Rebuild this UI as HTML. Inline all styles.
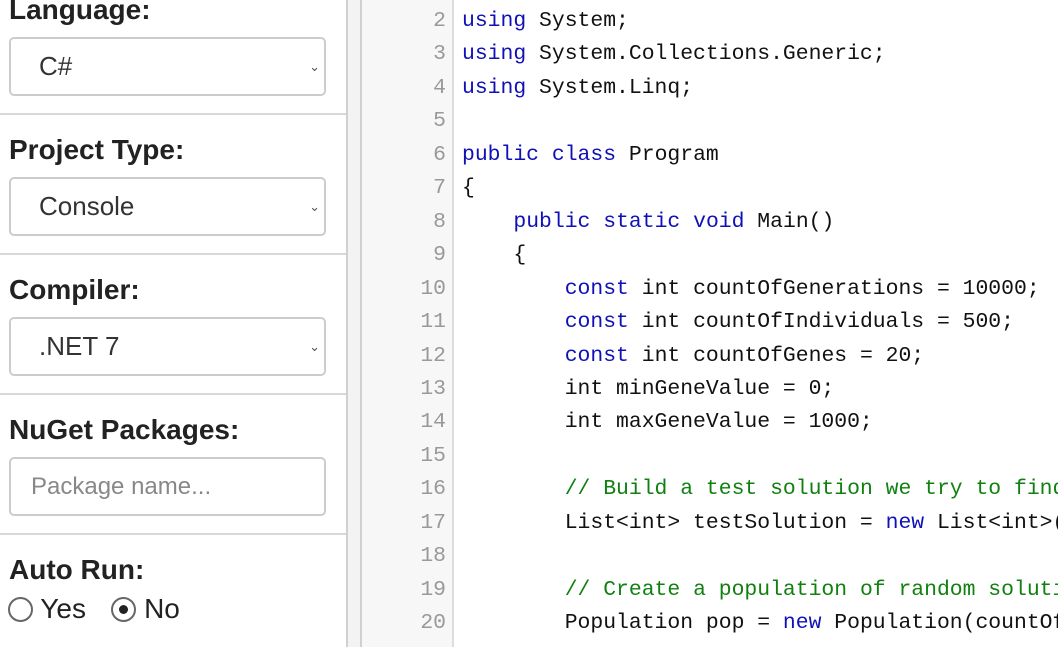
<!DOCTYPE html>
<html><head><style>
body{margin:0;width:1058px;height:647px;overflow:hidden;background:#fff;font-family:"Liberation Sans",sans-serif;position:relative}
.side{position:absolute;left:0;top:0;width:346px;height:647px;border-right:2px solid #d0d0d0;background:#fff}
.lab{position:absolute;left:9px;font-weight:bold;font-size:28px;color:#222}
.sel{position:absolute;left:9px;width:313px;height:55px;border:2px solid #ccc;border-radius:5px;font-size:26px;color:#333;line-height:55px;box-sizing:content-box}
.sel span{position:absolute;left:28px}
.sel i{position:absolute;right:4px;top:0;font-style:normal;font-size:13px;color:#555}
.hr{position:absolute;left:0;width:346px;height:2px;background:#d8d8d8}
.gap{position:absolute;left:348px;top:0;width:12px;height:647px;background:#f3f3f3;border-right:2px solid #d0d0d0}
.gut{position:absolute;left:362px;top:0;width:90px;height:647px;background:#f7f7f7;border-right:2px solid #ddd}
.ln{position:absolute;width:446px;left:0;text-align:right;font-family:"Liberation Mono",monospace;font-size:21.4px;color:#999}
.cd{position:absolute;left:462px;font-family:"Liberation Mono",monospace;font-size:21.4px;color:#111;white-space:pre}
.k{color:#1010b8}.c{color:#118011}
.r{display:inline-block;width:25px;height:25px;border:2px solid #666;border-radius:50%;box-sizing:border-box;vertical-align:-4px;position:relative}
</style></head><body>
<div class="side">
<div class="lab" style="top:-6px">Language:</div>
<div class="sel" style="top:37px"><span>C#</span><i>⌄</i></div>
<div class="hr" style="top:113px"></div>
<div class="lab" style="top:134px">Project Type:</div>
<div class="sel" style="top:177px"><span>Console</span><i>⌄</i></div>
<div class="hr" style="top:253px"></div>
<div class="lab" style="top:274px">Compiler:</div>
<div class="sel" style="top:317px"><span>.NET 7</span><i>⌄</i></div>
<div class="hr" style="top:393px"></div>
<div class="lab" style="top:414px">NuGet Packages:</div>
<div class="sel" style="top:457px;color:#888;font-size:24px"><span style="left:20px">Package name...</span></div>
<div class="hr" style="top:533px"></div>
<div class="lab" style="top:554px">Auto Run:</div>
<div style="position:absolute;left:8px;top:593px;font-size:28px;color:#222"><span class="r"></span> Yes &nbsp;&nbsp;<span class="r" style="margin-left:2px"><span style="position:absolute;left:6px;top:6px;width:9px;height:9px;border-radius:50%;background:#222"></span></span> No</div>
</div>
<div class="gap"></div>
<div class="gut"></div>
<div id="code"></div>
<script>
var L=[
'<span class="k">using</span> System;',
'<span class="k">using</span> System.Collections.Generic;',
'<span class="k">using</span> System.Linq;',
'',
'<span class="k">public</span> <span class="k">class</span> Program',
'{',
'    <span class="k">public</span> <span class="k">static</span> <span class="k">void</span> Main()',
'    {',
'        <span class="k">const</span> int countOfGenerations = 10000;',
'        <span class="k">const</span> int countOfIndividuals = 500;',
'        <span class="k">const</span> int countOfGenes = 20;',
'        int minGeneValue = 0;',
'        int maxGeneValue = 1000;',
'',
'        <span class="c">// Build a test solution we try to find</span>',
'        List&lt;int&gt; testSolution = <span class="k">new</span> List&lt;int&gt;();',
'',
'        <span class="c">// Create a population of random solutions</span>',
'        Population pop = <span class="k">new</span> Population(countOf'];
var h='';
for(var i=0;i<L.length;i++){var t=9+i*33.45;
h+='<div class="ln" style="top:'+t+'px">'+(i+2)+'</div><div class="cd" style="top:'+t+'px">'+L[i]+'</div>';}
document.getElementById('code').innerHTML=h;
</script>
</body></html>
